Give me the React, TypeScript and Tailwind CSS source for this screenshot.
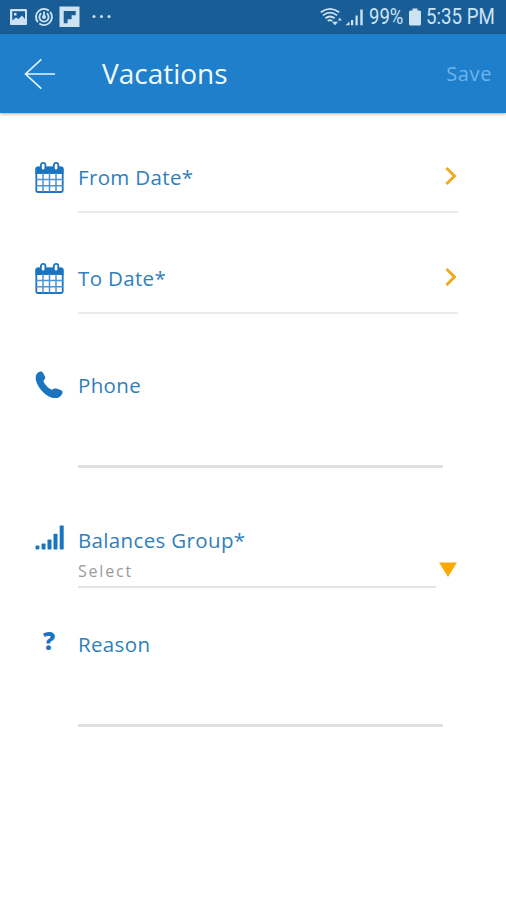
import type { ReactNode } from 'react';

function CalendarIcon() {
    return (
        <svg width="30" height="32" viewBox="0 0 30 32" fill="none" className="block">
            <rect x="1.3" y="6.5" width="26.4" height="24.5" rx="1.5" stroke="#1b74c0" strokeWidth="1.8" />
            <path d="M0.5 7.7Q0.5 5.7 2.5 5.7H26.5Q28.5 5.7 28.5 7.7V13H0.5Z" fill="#1b74c0" />
            <path d="M8 12V31M14.5 12V31M21 12V31M1 18.5H28M1 24.7H28" stroke="#4e94d0" strokeWidth="1.5" />
            <rect x="5.9" y="1.9" width="4.5" height="7.6" rx="2.2" fill="#fff" stroke="#1b74c0" strokeWidth="1.8" />
            <rect x="18.8" y="1.9" width="4.5" height="7.6" rx="2.2" fill="#fff" stroke="#1b74c0" strokeWidth="1.8" />
        </svg>
    );
}

function PhoneIcon() {
    return (
        <svg width="28" height="28" viewBox="0 0 28 28" fill="#1b74c0" className="block">
            <path d="M5.2 0.6C6.4 0.1 7.4 0.8 7.9 1.8L10 5.4C10.5 6.6 10.2 7.5 9.6 8.2L8.3 9.9C9.5 13.3 13.2 17 16.8 18.7L18.8 17.8C20 17.2 21 17.3 22 17.8L26.2 19.2C27.5 19.8 27.8 21 27.4 22.4C26 25.8 23 27.3 19.5 27.1C12 26.6 1.5 16.5 0.7 7.4C0.5 4 2 1.8 5.2 0.6Z" />
        </svg>
    );
}

function BarsIcon() {
    return (
        <svg width="29" height="25" viewBox="0 0 29 25" fill="#1b74c0" className="mb-[5px] block">
            <rect x="0.5" y="20.5" width="3.9" height="4" rx="1" />
            <rect x="6.6" y="18.5" width="3.9" height="6" rx="0.8" />
            <rect x="12.5" y="14.5" width="4" height="10" rx="0.8" />
            <rect x="18.5" y="8.8" width="4" height="15.7" rx="0.8" />
            <rect x="24.7" y="0.5" width="4" height="24" rx="0.8" />
        </svg>
    );
}

function ChevronIcon() {
    return (
        <svg width="14" height="20" viewBox="0 0 14 20" fill="none" className="block">
            <path d="M2.5 2L10.5 10L2.5 18" stroke="#f0a81c" strokeWidth="2.9" />
        </svg>
    );
}

function StatusBar() {
    return (
        <div className="flex h-[34px] items-center bg-[#185d96] pl-[10px] text-[#cde3f4]">
            <svg width="102" height="24" viewBox="10 5 102 24" fill="none" className="block">
                {/* gallery */}
                <path fillRule="evenodd" fill="currentColor" d="M11 9H26Q27 9 27 10V24Q27 25 26 25H11Q10 25 10 24V10Q10 9 11 9ZM12.3 11.3V20.5L16 17.5L18.5 19L22 15.5L25 19V11.3ZM14 13H16.5V15.5H14Z" />
                {/* sync target */}
                <circle cx="44" cy="17" r="8" stroke="currentColor" strokeWidth="1.9" strokeDasharray="23 2 23.3 2" transform="rotate(-40 44 17)" />
                <path d="M41.2 13.3A4.6 4.6 0 1 0 46.8 13.3M44 11.5V17" stroke="currentColor" strokeWidth="1.8" />
                <circle cx="44" cy="17" r="2" fill="currentColor" />
                {/* flipboard */}
                <path fillRule="evenodd" fill="currentColor" d="M59.5 6.5H79.5V27H59.5ZM63.7 11V23.3H67.6V19.2H71.6V15.2H75.7V11Z" />
                <circle cx="94" cy="16.5" r="1.5" fill="currentColor" />
                <circle cx="101.5" cy="16.5" r="1.5" fill="currentColor" />
                <circle cx="109" cy="16.5" r="1.5" fill="currentColor" />
            </svg>
            <svg width="44" height="20" viewBox="320 7 44 20" fill="none" className="ml-[208px] block shrink-0">
                {/* wifi */}
                <path d="M320.8 12.3Q330 5.3 339.2 12.3M323 15.4Q330 10 337 15.4M325.4 18.3Q330 14.7 334.6 18.3M327.8 21Q330 19.3 332.2 21" stroke="currentColor" strokeWidth="1.8" />
                <path d="M332 21.8H338L335 25.2ZM337.8 20.4L339.8 17.8L341.8 20.4Z" fill="currentColor" />
                {/* signal */}
                <path d="M345.5 25.3L349.5 21.5V25.3ZM351 20H353.2V25.3H351ZM355.5 15.5H357.7V25.3H355.5ZM360.3 9.5H362.7V25.3H360.3Z" fill="currentColor" />
            </svg>
            <div className="ml-[5px] w-[36px] shrink-0">
                <span className="inline-block origin-left scale-x-[0.84] font-['Roboto',sans-serif] text-[22px] leading-[34px]">99%</span>
            </div>
            <svg width="12" height="18" viewBox="0 0 12 18" className="ml-[4px] block shrink-0" fill="currentColor">
                <path d="M3.5 0.5H8.5V2.5H10.5Q12 2.5 12 4V16Q12 17.5 10.5 17.5H1.5Q0 17.5 0 16V4Q0 2.5 1.5 2.5H3.5Z" />
            </svg>
            <div className="ml-[5px] w-[70px] shrink-0">
                <span className="inline-block origin-left scale-x-[0.85] whitespace-nowrap font-['Roboto',sans-serif] text-[22px] leading-[34px]">5:35 PM</span>
            </div>
        </div>
    );
}

function Header() {
    return (
        <header className="flex h-[79px] items-center justify-between bg-[#1f7fca] pl-6 pr-[14px] shadow-[0_1px_3px_rgba(0,0,0,0.35)]">
            <div className="flex items-center">
                <svg width="32" height="32" viewBox="0 0 32 32" fill="none" stroke="#e8f6ff" strokeWidth="1.6" className="block">
                    <path d="M31 16H1.5M17.3 1.3L1.5 16L17.3 30.7" />
                </svg>
                <h1 className="mb-px ml-[46px] text-[28px] leading-[40px] text-[#f2faff]">Vacations</h1>
            </div>
            <span className="pt-px text-[20px] leading-[40px] tracking-[0.6px] text-[#6db5ed]">Save</span>
        </header>
    );
}

function Field({ icon, label, children }: { icon: ReactNode; label: string; children?: ReactNode }) {
    return (
        <div className="flex">
            <div className="flex h-8 w-[43px] shrink-0 items-center">{icon}</div>
            <div className="flex-1">
                <div className="text-[20.5px] leading-8 tracking-[0.35px] text-[#2f80bb]">{label}</div>
                {children}
            </div>
        </div>
    );
}

function DateField({ label }: { label: string }) {
    return (
        <div className="flex h-[101px]">
            <div className="h-8 w-[43px] shrink-0"><CalendarIcon /></div>
            <div className="flex h-[52px] w-[380px] justify-between border-b-2 border-[#ebebeb]">
                <span className="text-[20.5px] leading-8 tracking-[0.35px] text-[#2f80bb]">{label}</span>
                <div className="pt-[5px]"><ChevronIcon /></div>
            </div>
        </div>
    );
}

export default function App() {
    return (
        <div className="min-h-[900px] w-[506px] bg-white font-['Open_Sans',sans-serif]">
            <StatusBar />
            <Header />
            <main className="pl-[35px] pt-12">
                <DateField label="From Date*" />
                <DateField label="To Date*" />
                <div className="mt-[6px] h-[155px]">
                    <Field icon={<PhoneIcon />} label="Phone">
                        <div className="h-[67px] w-[365px] border-b-[3px] border-[#e0e0e0]" />
                    </Field>
                </div>
                <div className="h-[104px]">
                    <Field icon={<BarsIcon />} label="Balances Group*">
                        <div className="flex">
                            <div className="h-[32px] w-[358px] border-b-2 border-[#e4e4e4] text-[16px] leading-[30px] tracking-[1.8px] text-[#9b9b9b]">Select</div>
                            <svg width="18" height="15" viewBox="0 0 18 15" fill="#fba905" className="ml-[3px] mt-[6px] block">
                                <path d="M0 0.5H18L9 15Z" />
                            </svg>
                        </div>
                    </Field>
                </div>
                <Field icon={<span className="mb-[6px] w-7 text-center text-[24px] font-extrabold leading-7 text-[#1b74c0]">?</span>} label="Reason">
                    <div className="h-[67px] w-[365px] border-b-[3px] border-[#e0e0e0]" />
                </Field>
            </main>
        </div>
    );
}
